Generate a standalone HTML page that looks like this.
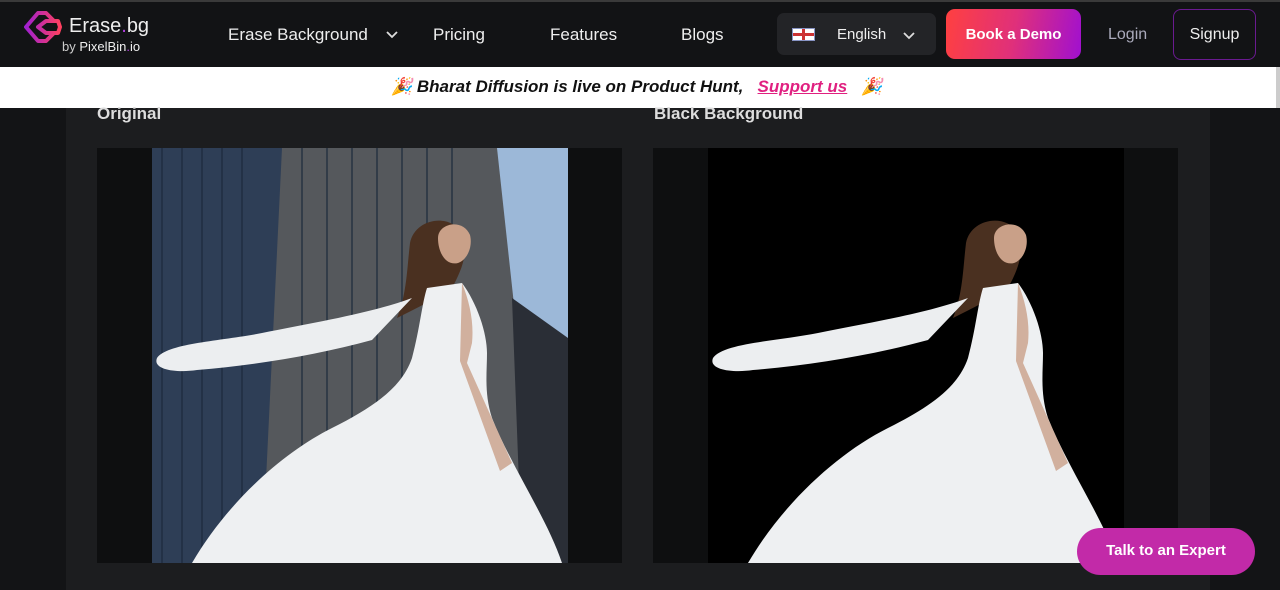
<!DOCTYPE html>
<html><head><meta charset="utf-8"><style>
*{margin:0;padding:0;box-sizing:border-box}
body{width:1280px;height:590px;overflow:hidden;background:#131416;font-family:"Liberation Sans",sans-serif;position:relative}
.hdr{position:absolute;left:0;top:0;width:1280px;height:67px;background:#121315;border-top:2px solid #3a3a3a}
.t{position:absolute;color:#eee;white-space:nowrap}
.ban{position:absolute;top:67px;left:0;width:1276px;height:41px;background:#fff}
.wrap{position:absolute;left:66px;top:108px;width:1144px;height:482px;background:#1c1d1f}
.sb{position:absolute;right:0;top:67px;width:4px;height:41px;background:#ccc}
</style></head><body>
<div class="hdr">
<svg style="position:absolute;left:24px;top:9px" width="38" height="32" viewBox="0 0 38 32"><defs><linearGradient id="g" x1="0" x2="1"><stop offset="0" stop-color="#a020d0"/><stop offset="1" stop-color="#ff4060"/></linearGradient></defs><path d="M14 2 L2 16 L14 30 L22 30 L30 22 L22 22 L14 16 L22 10 L30 10 L22 2Z M22 10 L34 10 L36 16 L34 22 L22 22" fill="none" stroke="url(#g)" stroke-width="4" stroke-linejoin="round"/></svg>
<div class="t" style="left:69px;top:13px;font-size:20px">Erase<span style="color:#b040e0">.</span>bg</div>
<div class="t" style="left:62px;top:37px;font-size:13px;color:#ccc">by <b style="color:#eee;font-weight:normal">PixelBin<span style="color:#b040e0">.</span>io</b></div>
<div class="t" style="left:228px;top:23px;font-size:17px">Erase Background</div>
<svg style="position:absolute;left:385px;top:28px" width="14" height="9"><path d="M2 2l5 5 5-5" stroke="#ddd" stroke-width="1.8" fill="none"/></svg>
<div class="t" style="left:433px;top:23px;font-size:17px">Pricing</div>
<div class="t" style="left:550px;top:23px;font-size:17px">Features</div>
<div class="t" style="left:681px;top:23px;font-size:17px">Blogs</div>
<div style="position:absolute;left:777px;top:11px;width:159px;height:42px;background:#232427;border-radius:7px"></div>
<div style="position:absolute;left:793px;top:27px;width:21px;height:11px;background:linear-gradient(#c33 0 0) center/100% 3px no-repeat,linear-gradient(#c33 0 0) center/3px 100% no-repeat,#fff;outline:1px solid #8894c4"></div>
<div class="t" style="left:837px;top:24px;font-size:15px">English</div>
<svg style="position:absolute;left:902px;top:29px" width="14" height="9"><path d="M2 2l5 5 5-5" stroke="#ddd" stroke-width="1.8" fill="none"/></svg>
<div style="position:absolute;left:946px;top:7px;width:135px;height:50px;border-radius:9px;background:linear-gradient(100deg,#ff4040,#e0307a 50%,#a010d0)"></div>
<div class="t" style="left:946px;top:24px;width:135px;text-align:center;font-size:15px;font-weight:bold;color:#fff">Book a Demo</div>
<div class="t" style="left:1108px;top:24px;font-size:16px;color:#aab">Login</div>
<div style="position:absolute;left:1173px;top:7px;width:83px;height:51px;border:1.5px solid #6a1a90;border-radius:8px"></div>
<div class="t" style="left:1173px;top:24px;width:83px;text-align:center;font-size:16px">Signup</div>
</div>
<div class="ban"><div class="t" style="left:391px;top:10px;font-size:17px;color:#111;font-weight:bold;font-style:italic">🎉 Bharat Diffusion is live on Product Hunt, &nbsp;&nbsp;<span style="color:#e02080;text-decoration:underline">Support us</span> &nbsp;&nbsp;🎉</div></div>
<div class="sb"></div>
<div class="wrap">
<div class="t" style="left:31px;top:-4px;font-size:17px;font-weight:bold;color:#ddd">Original</div>
<div class="t" style="left:588px;top:-4px;font-size:17px;font-weight:bold;color:#ddd">Black Background</div>
<div style="position:absolute;left:31px;top:40px;width:525px;height:415px;background:#0e0f10"></div>
<div style="position:absolute;left:587px;top:40px;width:525px;height:415px;background:#0e0f10"></div>
</div>
<svg width="0" height="0" style="position:absolute"><defs>
<g id="w">
<path d="M258 95c5-25 40-30 52-10 8 20-2 40-10 55-15 10-35 20-55 30 10-25 10-50 13-75z" fill="#4a3020"/>
<path d="M260 150c-40 15-100 25-150 35-40 8-95 10-105 25-5 12 20 15 40 12 60-5 120-15 175-30z" fill="#eceef0"/>
<path d="M275 140l35-5c15 20 25 50 25 70 0 20-3 40 5 65 20 50 55 100 70 145H40c35-60 90-110 140-135 40-20 70-40 80-70 8-30 10-55 15-70z" fill="#eef0f2"/>
<path d="M286 90c0-15 25-20 32-3 3 12-3 25-12 28-12 3-20-10-20-25z" fill="#c9a088"/>
<path d="M310 135c8 20 12 40 10 60l-5 20 45 100-12 8-40-110z" fill="#c9a088" opacity=".8"/>
</g></defs></svg>
<svg style="position:absolute;left:152px;top:148px" width="416" height="415" viewBox="0 0 416 415">
<rect width="416" height="415" fill="#8aa6c8"/>
<rect x="340" width="76" height="415" fill="#9cb8d8"/>
<polygon points="0,0 130,0 135,415 0,415" fill="#2e3e56"/>
<polygon points="130,0 345,0 390,415 110,415" fill="#55585c"/>
<polygon points="360,150 416,190 416,415 370,415" fill="#2a2e36"/>
<g stroke="#1c2a3c" stroke-width="2" opacity=".6"><path d="M10 0V415M30 0V415M50 0V415M70 0V415M90 0V415M150 0V415M175 0V415M200 0V415M225 0V415M250 0V415M275 0V415M300 0V415"/></g>
<use href="#w"/>
</svg>
<svg style="position:absolute;left:708px;top:148px" width="416" height="415" viewBox="0 0 416 415">
<rect width="416" height="415" fill="#000"/>
<use href="#w"/>
</svg>
<div style="position:absolute;left:1077px;top:528px;width:178px;height:47px;border-radius:24px;background:#c22aa8"></div>
<div class="t" style="left:1077px;top:542px;width:178px;text-align:center;font-size:15px;font-weight:bold;color:#fff">Talk to an Expert</div>
</body></html>
